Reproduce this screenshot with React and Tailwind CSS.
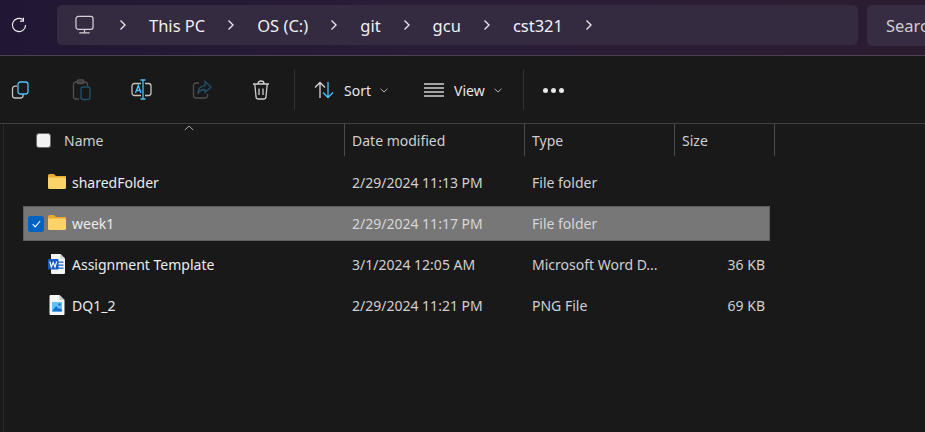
const font = "[font-family:'Noto_Sans','Open_Sans',sans-serif]";

const Chevron = ({ className }) => (
  <svg width="8" height="12" viewBox="0 0 8 12" fill="none" stroke="#e8e6ea" strokeWidth="1.4" className={className}>
    <path d="M1.5 1.5 6 6l-4.500 4.500" />
  </svg>
);

const Caret = ({ className }) => (
  <svg width="8" height="5" viewBox="0 0 8 5" fill="none" stroke="#b5b5b5" strokeWidth="1" className={className}>
    <path d="M.5 .8 4 4 7.500 .8" />
  </svg>
);

const Refresh = () => (
  <svg width="16" height="16" viewBox="0 0 16 16" fill="none" stroke="#f0f0f0" strokeWidth="1.200">
    <path d="M11.800 2.600A6.600 6.600 0 1 0 14.600 8" />
    <path d="M12.400 .8v3.400H9" />
  </svg>
);

const Monitor = () => (
  <svg width="19" height="20" viewBox="0 0 20 20" fill="none" stroke="#d4d2d8" strokeWidth="1.300">
    <rect x="1" y="1" width="18" height="13.500" rx="2.500" />
    <path d="M10 14.500v3.500M4.500 18.300h11" />
  </svg>
);

const CopyIcon = () => (
  <svg width="20" height="20" viewBox="0 0 20 20" fill="none" strokeWidth="1.300">
    <path d="M6 6.200H4a2.500 2.500 0 0 0-2.500 2.500v6.800A2.500 2.500 0 0 0 4 18h5.500a2.500 2.500 0 0 0 2.500-2.500V14" stroke="#c4c4c4" />
    <rect x="7" y="2" width="10" height="12" rx="2.500" stroke="#4cc2ff" />
  </svg>
);

const PasteIcon = () => (
  <svg width="20" height="22" viewBox="0 0 20 22" fill="none" strokeWidth="1.300">
    <path d="M7 20H4a2.500 2.500 0 0 1-2.500-2.500v-12A2.500 2.500 0 0 1 4 3h9a2.500 2.500 0 0 1 2.500 2.500V7" stroke="#4f4f4f" />
    <rect x="5" y="1" width="7" height="3.500" rx="1.500" stroke="#4f4f4f" />
    <rect x="9" y="8" width="9" height="12.500" rx="2" stroke="#24506a" />
  </svg>
);

const RenameIcon = () => (
  <svg width="22" height="22" viewBox="0 0 22 22" fill="none" strokeWidth="1.300">
    <path d="M10 4.500H3.500A2.500 2.500 0 0 0 1 7v7a2.500 2.500 0 0 0 2.500 2.500H10M14 4.500h3.500A2.500 2.500 0 0 1 20 7v7a2.500 2.500 0 0 1-2.500 2.500H14" stroke="#c4c4c4" />
    <path d="M9.500 1h5M9.500 20h5M12 1v19" stroke="#4cc2ff" />
    <path d="M4.500 14 7.300 6.500 10 14M5.500 11.500h3.800" stroke="#4cc2ff" />
  </svg>
);

const ShareIcon = () => (
  <svg width="20" height="20" viewBox="0 0 20 20" fill="none" strokeWidth="1.300">
    <path d="M7 3H4a2.500 2.500 0 0 0-2.500 2.500v10A2.500 2.500 0 0 0 4 18h9a2.500 2.500 0 0 0 2.500-2.500V14" stroke="#4f4f4f" />
    <path d="M13 1.500 19 7l-6 5.500V9.500C9.500 9.500 7 11 6 14c0-5 2.500-8 7-8.300z" stroke="#24506a" />
  </svg>
);

const TrashIcon = () => (
  <svg width="18" height="20" viewBox="0 0 18 20" fill="none" stroke="#cfcfcf" strokeWidth="1.300">
    <path d="M1 4h16M6 3.800C6 2 7.200 1 9 1s3 1 3 2.800" />
    <path d="M2.800 4.200 4 16.500A2.500 2.500 0 0 0 6.500 19h5a2.500 2.500 0 0 0 2.500-2.500l1.200-12.300" />
    <path d="M7 8.500v6.500M11 8.500v6.500" />
  </svg>
);

const SortIcon = () => (
  <svg width="20" height="18" viewBox="0 0 20 18" fill="none" strokeWidth="1.300">
    <path d="M6 17V1.500M1 6.500l5-5 5 5" stroke="#d8d8d8" />
    <path d="M14 1v15.500M9 11.500l5 5 5-5" stroke="#4cc2ff" />
  </svg>
);

const ViewIcon = () => (
  <svg width="20" height="14" viewBox="0 0 20 14" fill="none" stroke="#d0d0d0">
    <path d="M0 1h20M0 5h20M0 9h20M0 13h20" strokeWidth="1.300" />
  </svg>
);

const FolderIcon = () => (
  <svg width="18" height="15" viewBox="0 0 18 15">
    <path d="M0 1.500A1.500 1.500 0 0 1 1.500 0h4.300l2.200 2H18v3H0z" fill="#e9a92c" />
    <path d="M0 3.500h16.500A1.500 1.500 0 0 1 18 5v8.500a1.500 1.500 0 0 1-1.500 1.500h-15A1.500 1.500 0 0 1 0 13.500z" fill="#fbd368" />
  </svg>
);

const WordIcon = () => (
  <svg width="18" height="20" viewBox="0 0 18 20">
    <path d="M3 0h9.500L17 4.500V19a1 1 0 0 1-1 1H4a1 1 0 0 1-1-1z" fill="#f4f4f4" />
    <path d="M12.500 0 17 4.500h-4.500z" fill="#c9c9c9" />
    <rect x="10" y="7.500" width="5.500" height="1.300" fill="#2a6cc4" />
    <rect x="10" y="10.500" width="5.500" height="1.300" fill="#2a6cc4" />
    <rect x="10" y="13.500" width="5.500" height="1.300" fill="#2a6cc4" />
    <rect x="0" y="5" width="10.500" height="10.500" rx="1" fill="#185abd" />
    <path d="M1.800 7.500 3.300 13 5.200 8.500 7 13 8.700 7.500" fill="none" stroke="#fff" strokeWidth="1.100" />
  </svg>
);

const PngIcon = () => (
  <svg width="16" height="20" viewBox="0 0 16 20">
    <path d="M1 0h9.500L15.500 5v14a1 1 0 0 1-1 1H1.500a1 1 0 0 1-1-1V1z" fill="#f6f6f6" />
    <path d="M10.500 0 15.500 5h-5z" fill="#c9c9c9" />
    <rect x="3" y="7" width="10" height="9.500" fill="#63c3f0" />
    <path d="M3 16.500 7 11l3 3 1-1 2 2v1.500z" fill="#1273c9" />
    <circle cx="10.500" cy="9.500" r="1.200" fill="#1c74c9" />
  </svg>
);

const crumbs = ['This PC', 'OS (C:)', 'git', 'gcu', 'cst321'];

const rows = [
  { name: 'sharedFolder', date: '2/29/2024 11:13 PM', type: 'File folder', size: '', Icon: FolderIcon },
  { name: 'week1', date: '2/29/2024 11:17 PM', type: 'File folder', size: '', Icon: FolderIcon, selected: true },
  { name: 'Assignment Template', date: '3/1/2024 12:05 AM', type: 'Microsoft Word D...', size: '36 KB', Icon: WordIcon },
  { name: 'DQ1_2', date: '2/29/2024 11:21 PM', type: 'PNG File', size: '69 KB', Icon: PngIcon },
];

const Row = ({ row }) => {
  const { Icon } = row;
  return (
    <div
      className={`grid grid-cols-[321px_180px_150px_90px] h-[35px] mb-[6px] w-[747px] items-center text-[14px] border ${
        row.selected ? 'bg-[#777777] border-[#5f5f5f]' : 'border-transparent'
      }`}
    >
      <div className="flex items-center h-full">
        <div className="w-[20px] flex justify-end">
          {row.selected && (
            <div className="w-4 h-4 rounded-[3px] bg-[#0063c4] flex items-center justify-center">
              <svg width="9" height="8" viewBox="0 0 9 8" fill="none" stroke="#fff" strokeWidth="1.100">
                <path d="M.8 4.200 3.200 6.800 8.200 1" />
              </svg>
            </div>
          )}
        </div>
        <div className="w-[26px] flex justify-center shrink-0 mt-[-2px]">
          <Icon />
        </div>
        <span className="ml-[2px] text-[#ececec] whitespace-nowrap">{row.name}</span>
      </div>
      <span className={`pl-[7px] whitespace-nowrap ${row.selected ? 'text-[#d6d6d6]' : 'text-[#d0d0d0]'}`}>{row.date}</span>
      <span className={`pl-[7px] whitespace-nowrap ${row.selected ? 'text-[#d6d6d6]' : 'text-[#d0d0d0]'}`}>{row.type}</span>
      <span className="text-right text-[#d0d0d0] whitespace-nowrap">{row.size}</span>
    </div>
  );
};

export default function App() {
  return (
    <div className={`w-[925px] h-[432px] overflow-hidden bg-[#191919] flex flex-col ${font}`}>
      <div className="h-[56px] shrink-0 flex items-start border-b border-[#4a434f] bg-gradient-to-r from-[#211734] via-[#2a1d38] to-[#2c1c30]">
        <div className="w-[57px] h-[50px] flex items-center pl-[11px]">
          <Refresh />
        </div>
        <div className="mt-[5px] h-[40px] w-[801px] rounded-[5px] bg-[#342b40] flex items-center pl-[18px] text-[16.500px] text-[#f2f0f4]">
          <Monitor />
          <Chevron className="ml-[25px]" />
          {crumbs.map((c) => (
            <div key={c} className="flex items-center ml-[22px]">
              <span className="pt-[2px] whitespace-nowrap">{c}</span>
              <Chevron className="ml-[22px]" />
            </div>
          ))}
        </div>
        <div className="mt-[5px] ml-[9px] h-[41px] flex-1 rounded-l-[5px] bg-[#372d42] flex items-center pl-[19px] pt-[2px] text-[16.500px] text-[#cfcdd2] overflow-hidden">
          Search
        </div>
      </div>

      <div className="h-[68px] shrink-0 flex items-center border-b border-[#3f3f3f] text-[14px] text-[#e8e8e8]">
        <div className="w-[72px] pl-[11px]"><CopyIcon /></div>
        <div className="w-[59px]"><PasteIcon /></div>
        <div className="w-[61px]"><RenameIcon /></div>
        <div className="w-[60px]"><ShareIcon /></div>
        <div className="w-[42px]"><TrashIcon /></div>
        <div className="w-px h-[40px] bg-[#333333]" />
        <div className="ml-[19px]"><SortIcon /></div>
        <span className="ml-[10px] pt-[2px]">Sort</span>
        <Caret className="ml-[9px] mt-[2px]" />
        <div className="ml-[36px]"><ViewIcon /></div>
        <span className="ml-[10px] pt-[2px]">View</span>
        <Caret className="ml-[9px] mt-[2px]" />
        <div className="ml-[21px] w-px h-[40px] bg-[#333333]" />
        <div className="ml-[19px] mt-[1px] flex gap-[3px]">
          <span className="w-[5px] h-[5px] rounded-full bg-[#e8e8e8]" />
          <span className="w-[5px] h-[5px] rounded-full bg-[#e8e8e8]" />
          <span className="w-[5px] h-[5px] rounded-full bg-[#e8e8e8]" />
        </div>
      </div>

      <div className="flex-1 flex border-l-[3px] border-[#191919] shadow-[inset_1px_0_0_#2a2a2a]">
        <div className="flex-1 pl-[20px]">
          <div className="grid grid-cols-[322px_180px_150px_100px] h-[32px] text-[14px] text-[#cfcfcf] items-stretch w-[752px] relative">
            <div className="flex items-center border-r border-[#4c4c4c] pl-[13px]">
              <span className="w-[15px] h-[15px] rounded-[3px] bg-[#f3f3f3] border border-[#6c6c6c]" />
              <span className="ml-[13px]">Name</span>
            </div>
            <div className="flex items-center border-r border-[#4c4c4c] pl-[7px]">Date modified</div>
            <div className="flex items-center border-r border-[#4c4c4c] pl-[7px]">Type</div>
            <div className="flex items-center border-r border-[#4c4c4c] pl-[7px]">Size</div>
            <svg width="10" height="6" viewBox="0 0 10 6" fill="none" stroke="#a8a8a8" className="absolute left-[161px] top-[1px]">
              <path d="M.8 5 5 1l4.200 4" />
            </svg>
          </div>
          <div className="pt-[9px]">
            {rows.map((row) => (
              <Row key={row.name} row={row} />
            ))}
          </div>
        </div>
      </div>
    </div>
  );
}
